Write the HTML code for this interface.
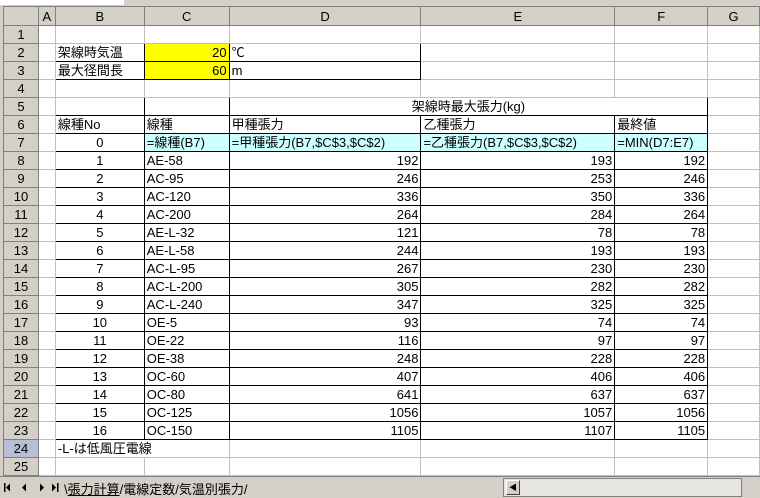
<!DOCTYPE html><html><head><meta charset="utf-8"><style>
body{margin:0;width:760px;height:497px;overflow:hidden;background:#fff;font-family:"Liberation Sans","Noto Sans CJK JP",sans-serif;font-size:13px;position:relative}
#top{position:absolute;left:0;top:0;width:760px;height:6px;background:#d4d0c8;border-bottom:1px solid #808080}
#top .w{position:absolute;left:0;top:0;width:124px;height:5px;background:#fff}
table{position:absolute;left:3px;top:6px;border-collapse:collapse;table-layout:fixed}
td{height:17px;padding:0 2px;border:1px solid #c0c0c0;white-space:nowrap;overflow:hidden;line-height:17px}
tr.h td{background:#d4d0c8;text-align:center;border-color:#808080;height:18px}
td.rh{background:#d4d0c8;text-align:center;border-color:#808080;color:#000}
td.rh.sel{background:#b6bfd5;}
.r{text-align:right}.c{text-align:center}
.y{background:#ffff00}.cy{background:#ccffff}
.bb{border:1px solid #000}
#lft{position:absolute;left:0;top:6px;width:3px;height:470px;background:#d4d0c8;border-right:1px solid #404040}
#tab{position:absolute;left:0;top:476px;width:760px;height:21px;background:#d4d0c8;border-top:1px solid #808080}
#tab .t{position:absolute;top:2px;font-size:13px}
</style></head><body>
<div id="top"><div class="w"></div></div>
<div id="lft"></div>
<table>
<colgroup><col style="width:35px"><col style="width:17px"><col style="width:89px"><col style="width:85px"><col style="width:192px"><col style="width:194px"><col style="width:93px"><col style="width:52px"></colgroup>
<tr class="h"><td></td><td>A</td><td>B</td><td>C</td><td>D</td><td>E</td><td>F</td><td>G</td></tr>
<tr><td class="rh">1</td><td></td><td></td><td></td><td></td><td></td><td></td><td></td></tr>
<tr><td class="rh">2</td><td></td><td class="bb">架線時気温</td><td class="bb y r">20</td><td class="bb">℃</td><td></td><td></td><td></td></tr>
<tr><td class="rh">3</td><td></td><td class="bb">最大径間長</td><td class="bb y r">60</td><td class="bb">m</td><td></td><td></td><td></td></tr>
<tr><td class="rh">4</td><td></td><td></td><td></td><td></td><td></td><td></td><td></td></tr>
<tr><td class="rh">5</td><td></td><td class="bb"></td><td class="bb"></td><td class="bb c" colspan="3">架線時最大張力(kg)</td><td></td></tr>
<tr><td class="rh">6</td><td></td><td class="bb">線種No</td><td class="bb">線種</td><td class="bb">甲種張力</td><td class="bb">乙種張力</td><td class="bb">最終値</td><td></td></tr>
<tr><td class="rh">7</td><td></td><td class="bb c">0</td><td class="bb cy">=線種(B7)</td><td class="bb cy">=甲種張力(B7,$C$3,$C$2)</td><td class="bb cy">=乙種張力(B7,$C$3,$C$2)</td><td class="bb cy">=MIN(D7:E7)</td><td></td></tr>
<tr><td class="rh">8</td><td></td><td class="bb c">1</td><td class="bb">AE-58</td><td class="bb r">192</td><td class="bb r">193</td><td class="bb r">192</td><td></td></tr>
<tr><td class="rh">9</td><td></td><td class="bb c">2</td><td class="bb">AC-95</td><td class="bb r">246</td><td class="bb r">253</td><td class="bb r">246</td><td></td></tr>
<tr><td class="rh">10</td><td></td><td class="bb c">3</td><td class="bb">AC-120</td><td class="bb r">336</td><td class="bb r">350</td><td class="bb r">336</td><td></td></tr>
<tr><td class="rh">11</td><td></td><td class="bb c">4</td><td class="bb">AC-200</td><td class="bb r">264</td><td class="bb r">284</td><td class="bb r">264</td><td></td></tr>
<tr><td class="rh">12</td><td></td><td class="bb c">5</td><td class="bb">AE-L-32</td><td class="bb r">121</td><td class="bb r">78</td><td class="bb r">78</td><td></td></tr>
<tr><td class="rh">13</td><td></td><td class="bb c">6</td><td class="bb">AE-L-58</td><td class="bb r">244</td><td class="bb r">193</td><td class="bb r">193</td><td></td></tr>
<tr><td class="rh">14</td><td></td><td class="bb c">7</td><td class="bb">AC-L-95</td><td class="bb r">267</td><td class="bb r">230</td><td class="bb r">230</td><td></td></tr>
<tr><td class="rh">15</td><td></td><td class="bb c">8</td><td class="bb">AC-L-200</td><td class="bb r">305</td><td class="bb r">282</td><td class="bb r">282</td><td></td></tr>
<tr><td class="rh">16</td><td></td><td class="bb c">9</td><td class="bb">AC-L-240</td><td class="bb r">347</td><td class="bb r">325</td><td class="bb r">325</td><td></td></tr>
<tr><td class="rh">17</td><td></td><td class="bb c">10</td><td class="bb">OE-5</td><td class="bb r">93</td><td class="bb r">74</td><td class="bb r">74</td><td></td></tr>
<tr><td class="rh">18</td><td></td><td class="bb c">11</td><td class="bb">OE-22</td><td class="bb r">116</td><td class="bb r">97</td><td class="bb r">97</td><td></td></tr>
<tr><td class="rh">19</td><td></td><td class="bb c">12</td><td class="bb">OE-38</td><td class="bb r">248</td><td class="bb r">228</td><td class="bb r">228</td><td></td></tr>
<tr><td class="rh">20</td><td></td><td class="bb c">13</td><td class="bb">OC-60</td><td class="bb r">407</td><td class="bb r">406</td><td class="bb r">406</td><td></td></tr>
<tr><td class="rh">21</td><td></td><td class="bb c">14</td><td class="bb">OC-80</td><td class="bb r">641</td><td class="bb r">637</td><td class="bb r">637</td><td></td></tr>
<tr><td class="rh">22</td><td></td><td class="bb c">15</td><td class="bb">OC-125</td><td class="bb r">1056</td><td class="bb r">1057</td><td class="bb r">1056</td><td></td></tr>
<tr><td class="rh">23</td><td></td><td class="bb c">16</td><td class="bb">OC-150</td><td class="bb r">1105</td><td class="bb r">1107</td><td class="bb r">1105</td><td></td></tr>
<tr><td class="rh sel">24</td><td></td><td colspan="2" style="border-right-color:#c0c0c0">-L-は低風圧電線</td><td></td><td></td><td></td><td></td></tr>
<tr><td class="rh">25</td><td></td><td></td><td></td><td></td><td></td><td></td><td></td></tr>
</table>
<div id="tab">
<svg style="position:absolute;left:4px;top:6px" width="56" height="9" viewBox="0 0 56 9">
<rect x="0" y="0" width="1.5" height="9"/><path d="M2 4.5 L6 0.5 V8.5Z"/>
<path d="M18 4.5 L22 0.5 V8.5Z"/>
<path d="M36 0.5 L40 4.5 L36 8.5Z"/>
<path d="M48 0.5 L52 4.5 L48 8.5Z"/><rect x="53" y="0" width="1.5" height="9"/>
</svg>
<span class="t" style="left:64px">\<u>張力計算</u>/電線定数/気温別張力/</span>
<div style="position:absolute;left:503px;top:1px;width:237px;height:17px;background:#e8e6e2;border:1px solid #808080"></div>
<div style="position:absolute;left:506px;top:3px;width:12px;height:13px;background:#d4d0c8;border:1px solid #fff;border-right-color:#404040;border-bottom-color:#404040;font-size:8px;line-height:13px;text-align:center">◀</div>
</div>
</body></html>
